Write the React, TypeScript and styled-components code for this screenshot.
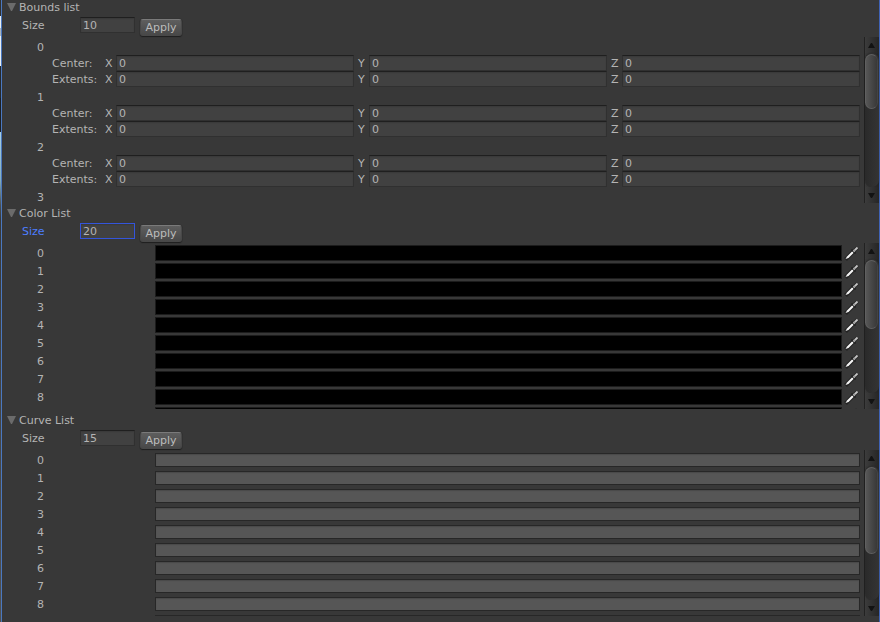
import React from 'react';
import styled, { createGlobalStyle, css } from 'styled-components';

const Global = createGlobalStyle`
  * { box-sizing: border-box; }
  body {
    margin: 0;
    background: #383838;
    color: #b4b4b4;
    font: 11px/16px "DejaVu Sans", Verdana, sans-serif;
    overflow: hidden;
  }
`;

const Window = styled.div`
  display: flex;
  height: 100vh;
  overflow: hidden;
`;

const DesktopEdge = styled.div`
  width: 1px;
  background: linear-gradient(
    #303030 16px, #e8eef2 16px 28px, #a9b4bf 28px 36px, #e8eef2 36px 66px,
    #25282c 66px 98px, #1c1f24 98px 132px, #a8d0e4 132px, #84aebf 180px,
    #4b5052 205px, #383838 220px, #505050
  );
`;

const Inspector = styled.main`
  flex: 1;
  min-width: 0;
  border-left: 1px solid #4a78c0;
  border-right: 1px solid #3f62b4;
`;

const Section = styled.section<{ $gap: number }>`
  padding-bottom: ${(p) => p.$gap}px;
`;

const Foldout = styled.button`
  display: flex;
  align-items: center;
  gap: 3px;
  width: 100%;
  height: 14px;
  padding: 0 0 0 5px;
  border: 0;
  background: none;
  color: inherit;
  font: inherit;
  line-height: 14px;
  text-align: left;

  svg { flex: none; }
  span { padding-top: 1px; }
`;

const SizeRow = styled.div<{ $focused?: boolean }>`
  display: flex;
  align-items: flex-start;
  height: 23px;
  padding: 3px 0 0 20px;

  label {
    width: 58px;
    padding-top: 1px;
    color: ${(p) => (p.$focused ? '#4c7eff' : 'inherit')};
  }
`;

const field = css`
  min-width: 0;
  height: 16px;
  padding: 0 2px;
  border: 1px solid #303030;
  border-top-color: #1f1f1f;
  border-radius: 0;
  outline: 0;
  background: #414141;
  box-shadow: inset 0 1px 1px #3a3a3a;
  color: #b4b4b4;
  font: inherit;
  line-height: 14px;
`;

const SizeInput = styled.input<{ $focused?: boolean }>`
  ${field}
  width: 55px;
  ${(p) => p.$focused && 'border-color: #3455db;'}
`;

const ApplyButton = styled.button`
  width: 42px;
  height: 17px;
  margin: 2px 0 0 5px;
  padding: 0;
  border: 1px solid #484848;
  border-top-color: #7a7a7a;
  border-radius: 3px;
  background: linear-gradient(#5e5e5e, #484848);
  box-shadow: 0 1px 1px #1e1e1e, 0 0 1px #1e1e1e;
  color: #bcbcbc;
  font: inherit;
`;

const ScrollArea = styled.div`
  display: flex;
  height: 166px;
`;

const Viewport = styled.div`
  flex: 1;
  min-width: 0;
  overflow: hidden;
  padding: 0 4px 0 35px;
`;

const BoundsItem = styled.div`
  height: 50px;
  padding-top: 2px;
`;

const ItemTitle = styled.div`
  height: 16px;
  padding-top: 1px;
`;

const VectorRow = styled.div`
  display: flex;
  height: 16px;
  padding-left: 15px;
`;

const VectorName = styled.span`
  width: 53px;
  padding-top: 1px;
`;

const Axis = styled.label`
  display: flex;
  flex: 1;
  min-width: 0;
  & + & { margin-left: 4px; }

  span {
    width: 11px;
    padding-top: 1px;
  }
`;

const AxisInput = styled.input`
  ${field}
  flex: 1;
`;

const ListItem = styled.div`
  display: flex;
  height: 18px;
  padding-top: 2px;
`;

const Index = styled.span`
  width: 118px;
  padding-top: 1px;
`;

const ColorSwatch = styled.button`
  flex: 1;
  height: 16px;
  padding: 0;
  border: 1px solid #1c1c1c;
  background: #000;
`;

const PickButton = styled.button`
  flex: none;
  width: 18px;
  height: 16px;
  padding: 0 0 0 2px;
  border: 0;
  background: none;
  svg { display: block; }
`;

const CurveBox = styled.button`
  flex: 1;
  height: 14px;
  margin-top: 1px;
  padding: 0;
  border: 1px solid #272727;
  background: #565656;
  box-shadow: inset 0 1px 1px #4a4a4a;
`;

const Bar = styled.div`
  display: flex;
  flex-direction: column;
  width: 15px;
  border-left: 1px solid #222;
  background: linear-gradient(90deg, #3a3a3a, #262626);
`;

const ArrowButton = styled.button`
  display: flex;
  align-items: center;
  justify-content: center;
  height: 16px;
  padding: 0 1px 0 0;
  border: 0;
  background: linear-gradient(90deg, #3c3c3c, #262626);
`;

const Track = styled.div`
  flex: 1;
  border-radius: 7px;
  background: linear-gradient(90deg, #2a2a2a, #343434);
  box-shadow: 0 0 1px #1c1c1c;
`;

const Thumb = styled.div<{ $length: number }>`
  height: ${(p) => p.$length}px;
  margin: 1px 1px 0 0;
  border: 1px solid #606060;
  border-right-color: #444;
  border-radius: 7px;
  background: linear-gradient(90deg, #575757, #383838);
`;

const Triangle = () => (
  <svg width="9" height="8" viewBox="0 0 9 8"><path d="M0 0H9L5 8H4Z" fill="#6b6b6b" /></svg>
);

const Dropper = () => (
  <svg width="15" height="16" viewBox="0 0 15 16">
    <path d="M1.5 14.5L10 6" stroke="#232323" strokeWidth="4" />
    <path d="M1.5 14L3 11.5L8.5 6L10 7.5L4.5 13Z" fill="#f4f4f4" />
    <path d="M7.5 4.5L11.5 8.5" stroke="#1d1d1d" strokeWidth="1.6" />
    <path d="M9 7L13.5 2.5" stroke="#262626" strokeWidth="3.6" />
    <path d="M9.5 6.5L13.5 2.5" stroke="#c4c4c4" strokeWidth="1.8" />
    <path d="M10 4.5L11.5 6" stroke="#777" strokeWidth="1" />
  </svg>
);

function Scrollbar({ length }: { length: number }) {
  return (
    <Bar>
      <ArrowButton aria-label="Scroll up">
        <svg width="7" height="5" viewBox="0 0 7 5"><path d="M3 0H4L7 5H0Z" fill="#121212" /></svg>
      </ArrowButton>
      <Track><Thumb $length={length} /></Track>
      <ArrowButton aria-label="Scroll down">
        <svg width="7" height="5" viewBox="0 0 7 5"><path d="M0 0H7L4 5H3Z" fill="#121212" /></svg>
      </ArrowButton>
    </Bar>
  );
}

interface ListProps {
  id: string;
  title: string;
  size: number;
  thumb: number;
  gap: number;
  focused?: boolean;
  children: React.ReactNode;
}

function ListSection({ id, title, size, thumb, gap, focused, children }: ListProps) {
  return (
    <Section $gap={gap}>
      <Foldout aria-expanded="true"><Triangle /><span>{title}</span></Foldout>
      <SizeRow $focused={focused}>
        <label htmlFor={id}>Size</label>
        <SizeInput id={id} defaultValue={size} $focused={focused} />
        <ApplyButton>Apply</ApplyButton>
      </SizeRow>
      <ScrollArea>
        <Viewport>{children}</Viewport>
        <Scrollbar length={thumb} />
      </ScrollArea>
    </Section>
  );
}

const range = (n: number) => Array.from({ length: n }, (_, i) => i);

export default function App() {
  return (
    <>
      <Global />
      <Window>
        <DesktopEdge />
        <Inspector>
          <ListSection id="bounds" title="Bounds list" size={10} thumb={55} gap={3}>
            {range(3).map((i) => (
              <BoundsItem key={i}>
                <ItemTitle>{i}</ItemTitle>
                {['Center:', 'Extents:'].map((name) => (
                  <VectorRow key={name}>
                    <VectorName>{name}</VectorName>
                    {['X', 'Y', 'Z'].map((axis) => (
                      <Axis key={axis}><span>{axis}</span><AxisInput defaultValue="0" /></Axis>
                    ))}
                  </VectorRow>
                ))}
              </BoundsItem>
            ))}
            <BoundsItem><ItemTitle>3</ItemTitle></BoundsItem>
          </ListSection>
          <ListSection id="colors" title="Color List" size={20} thumb={69} gap={4} focused>
            {range(10).map((i) => (
              <ListItem key={i}>
                {i < 9 ? <Index>{i}</Index> : <Index />}
                <ColorSwatch aria-label={`Color ${i}`} />
                <PickButton aria-label={`Pick color ${i}`}><Dropper /></PickButton>
              </ListItem>
            ))}
          </ListSection>
          <ListSection id="curves" title="Curve List" size={15} thumb={87} gap={3}>
            {range(10).map((i) => (
              <ListItem key={i}>
                {i < 9 ? <Index>{i}</Index> : <Index />}
                <CurveBox aria-label={`Curve ${i}`} />
              </ListItem>
            ))}
          </ListSection>
          <Foldout aria-expanded="true"><Triangle /><span>String Dictionary</span></Foldout>
        </Inspector>
      </Window>
    </>
  );
}
